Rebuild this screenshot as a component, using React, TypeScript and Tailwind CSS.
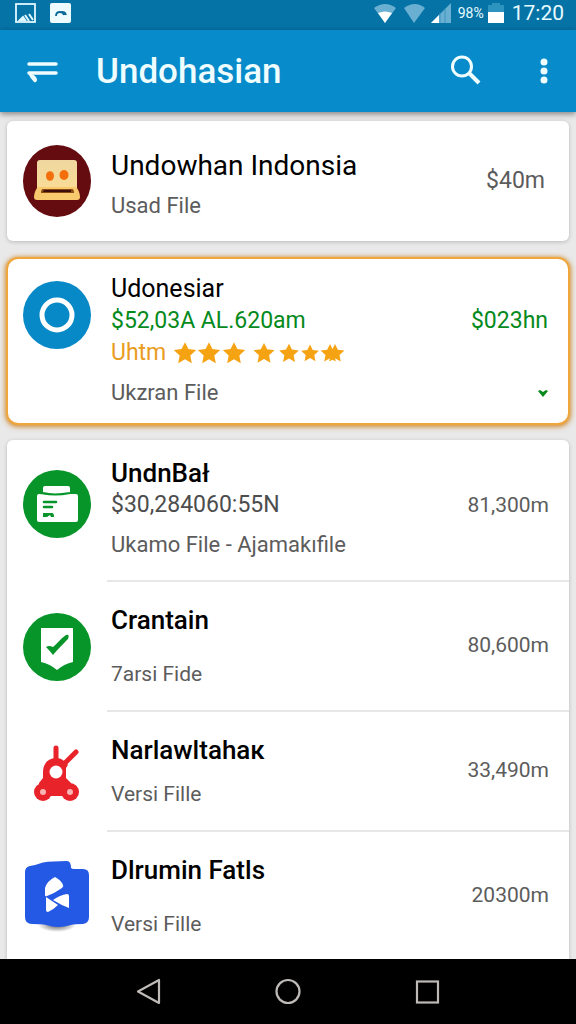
import type { ReactNode } from 'react';

/* ─────────────────────────────────────────────────────────────────────────
 * Icons
 * ───────────────────────────────────────────────────────────────────────── */

function LaptopAvatar() {
  return (
    <svg viewBox="0 0 68 72" className="h-[72px] w-[68px]" aria-hidden="true">
      <defs>
        <linearGradient id="laptop-screen" x1="0" y1="0" x2="0" y2="1">
          <stop offset="0%" stopColor="#efd7a0" />
          <stop offset="100%" stopColor="#fbdc95" />
        </linearGradient>
      </defs>
      <ellipse cx="34" cy="36" rx="34" ry="36" fill="#640c10" />
      <rect x="14" y="15" width="40" height="32" rx="3" fill="url(#laptop-screen)" />
      <path d="M15 42h38c2 2 4 6 4 10q0 3-3 3H14q-3 0-3-3c0-4 2-8 4-10z" fill="#f9c96d" />
      <path d="M20 44h29q2 0 2 4H18q0-4 2-4z" fill="#8a4a14" />
      <path d="M21 45h27v2H20z" fill="#3d0d0d" />
      <ellipse cx="27" cy="31" rx="4" ry="4.800" fill="#f26f0c" />
      <ellipse cx="41" cy="30" rx="4.500" ry="5" fill="#f26f0c" />
    </svg>
  );
}

function RingAvatar() {
  return (
    <svg viewBox="0 0 68 68" className="size-[68px]" aria-hidden="true">
      <circle cx="34" cy="34" r="34" fill="#0789c7" />
      <circle cx="34" cy="34" r="15" fill="none" stroke="#fff" strokeWidth="5" />
    </svg>
  );
}

function FolderAvatar() {
  return (
    <svg viewBox="0 0 68 68" className="size-[68px]" aria-hidden="true">
      <circle cx="34" cy="34" r="34" fill="#07952a" />
      <path d="M20 18q0-2 2-2h23q2 0 2 2v6H20z" fill="#fff" />
      <path d="M14 26q0-2 2-2l11 1 12-1h14q2 0 2 2v24q0 2-2 2H16q-2 0-2-2z" fill="#fff" />
      <path d="M20 23q11 3 27 0" fill="none" stroke="#07952a" strokeWidth="2" />
      <path d="M21 32h12M21 37h8" stroke="#07952a" strokeWidth="2.600" strokeLinecap="round" />
      <path d="M20 47v-4h9q2 0 2 4h-3l-1-2-3 2z" fill="#07952a" />
    </svg>
  );
}

function BadgeAvatar() {
  return (
    <svg viewBox="0 0 68 68" className="size-[68px]" aria-hidden="true">
      <circle cx="34" cy="34" r="34" fill="#07952a" />
      <path d="M18 15h32v34q-9 2-16 8-7-6-16-8z" fill="#fff" />
      <path d="M23 34q3-2 7 0c4-3 8-9 13-12q4-1 2 4c-5 5-9 9-15 16q-3-4-7-8z" fill="#07952a" />
    </svg>
  );
}

function RobotAvatar() {
  return (
    <svg viewBox="0 0 68 68" className="size-[68px]" aria-hidden="true">
      <g stroke="#e8232a" strokeWidth="5" strokeLinecap="round">
        <path d="M33 10v12M53 14L40 27" />
      </g>
      <path d="M20 35q0-14 13-15 5 0 8 3l4 4-2 3v14H20z" fill="#e8232a" />
      <path d="M20 40h23l5 5v13H16V45z" fill="#e8232a" />
      <circle cx="20" cy="54" r="9" fill="#e8232a" />
      <circle cx="47" cy="54" r="9" fill="#e8232a" />
      <circle cx="33" cy="34" r="6.500" fill="#fff" />
      <circle cx="20" cy="54" r="3" fill="#f9b4b4" />
      <circle cx="47" cy="54" r="3" fill="#f9b4b4" />
    </svg>
  );
}

function PuzzleAvatar() {
  return (
    <svg viewBox="0 0 68 72" className="h-[72px] w-[68px]" aria-hidden="true">
      <defs>
        <radialGradient id="puzzle-shadow">
          <stop offset="0%" stopColor="#333" stopOpacity="0.8" />
          <stop offset="100%" stopColor="#333" stopOpacity="0" />
        </radialGradient>
      </defs>
      <ellipse cx="34" cy="65" rx="19" ry="7" fill="url(#puzzle-shadow)" />
      <path
        d="M2 12q0-5 5-6 6-1 13-3.500 9-1.500 24-1.500 4 0 4 7 1 1 3 1h9q6 0 6 6v42q0 6-6 7-8 0-12 1-13 4-25 0-5-1-14-1-7 0-7-7z"
        fill="#2459e5"
      />
      <path d="M22 35v-7q2-7 10-11 6 3 8 8 1 1-1 3-7 5-15 8-2 1-2-1z" fill="#fff" />
      <path d="M30 40q7-5 14-6 2 0 2 2v12q-8-3-16-8z" fill="#fff" />
      <path d="M23 37l12 8q-5 5-10 7-2 0-2-2z" fill="#fff" />
    </svg>
  );
}

function StatusIcons() {
  return (
    <svg viewBox="0 0 78 20" className="h-5 w-[78px]" aria-hidden="true">
      <path d="M0 5q11-8 22 0L11 20z" fill="#69afd1" />
      <path d="M4 10q7-3 14 0l-7 10z" fill="#fff" />
      <path d="M30 5q11-8 21 0L40 20z" fill="#69afd1" />
      <path d="M57 20L77 0v20z" fill="#69afd1" />
      <path d="M57 20l8-8v8z" fill="#fff" />
      <path d="M66 10v10M71 6v14" stroke="#3f94be" strokeWidth="1" />
    </svg>
  );
}

const STAR = 'M0-11L3.500-4 11.500-3 5.500 2.500 7 10.500 0 6.500-7 10.500-5.500 2.500-11.500-3-3.500-4z';

const stars = [
  { x: 11, scale: 0.97 },
  { x: 35, scale: 0.97 },
  { x: 60, scale: 0.97 },
  { x: 90, scale: 0.92 },
  { x: 115, scale: 0.85 },
  { x: 136, scale: 0.78 },
  { x: 156, scale: 0.82 },
  { x: 161, scale: 0.82 },
];

function Stars() {
  return (
    <svg viewBox="0 0 172 24" className="h-6 w-[172px]" role="img" aria-label="Rating">
      {stars.map((s) => (
        <path
          key={s.x}
          d={STAR}
          transform={`translate(${s.x} 12) scale(${s.scale})`}
          fill="#f6a313"
        />
      ))}
    </svg>
  );
}

/* ─────────────────────────────────────────────────────────────────────────
 * Bars
 * ───────────────────────────────────────────────────────────────────────── */

function StatusBar() {
  return (
    <div className="flex h-[30px] shrink-0 items-center bg-[#0673a7] pr-3 pb-1 pl-[15px] text-[#e6fbff]">
      <svg viewBox="0 0 57 20" className="h-5 w-[57px]" aria-hidden="true">
        <rect x="1" y="1" width="19" height="18" fill="none" stroke="#dff8ff" strokeWidth="1.800" />
        <path d="M5 17l3-3 2 3zM10 12l4 6M14 11l4 6" fill="none" stroke="#dff8ff" strokeWidth="2" />
        <rect x="35" y="0" width="21" height="20" rx="2" fill="#effcff" />
        <path d="M41 13q0-4 4-4 3 0 4 3m-3-3q4-1 5 3" fill="none" stroke="#0a6a98" strokeWidth="1.800" />
      </svg>
      <div className="ml-auto flex items-center">
        <StatusIcons />
        <span className="ml-1.5 text-sm">98%</span>
        <svg viewBox="0 0 16 20" className="ml-1 h-5 w-4" aria-hidden="true">
          <path d="M0 2h4V0h8v2h4v8H0z" fill="#2d93bf" />
          <path d="M0 9h16v11H0z" fill="#fff" />
        </svg>
        <span className="ml-2 text-[21px]/[26px]">17:20</span>
      </div>
    </div>
  );
}

function AppBar() {
  return (
    <header className="relative z-10 flex h-[82px] shrink-0 items-center bg-[#078bca] pr-5 pl-[26px] text-[#effdff] shadow-[0_2px_6px_rgba(0,0,0,0.45)]">
      <button type="button" aria-label="Menu" className="flex size-8 items-center">
        <svg viewBox="0 0 32 24" className="h-6 w-8" aria-hidden="true">
          <path
            d="M3 5h27M3 14h27"
            fill="none"
            stroke="currentColor"
            strokeWidth="3.500"
            strokeLinecap="round"
          />
          <path d="M2 14q7 1 9 6 0 4-3 3-4-4-6-9z" fill="currentColor" />
        </svg>
      </button>
      <h1 className="ml-[38px] pt-0.5 text-[35px]/10 font-medium">Undohasian</h1>
      <div className="ml-auto flex items-center gap-[51px]">
        <button type="button" aria-label="Search">
          <svg viewBox="0 0 32 32" className="size-8" fill="none" stroke="currentColor" aria-hidden="true">
            <circle cx="13" cy="11.500" r="9.500" strokeWidth="3" />
            <path d="M20 18l10 10" strokeWidth="4" />
          </svg>
        </button>
        <button type="button" aria-label="More options">
          <svg viewBox="0 0 24 28" className="h-7 w-6" fill="currentColor" aria-hidden="true">
            <circle cx="12" cy="5" r="3.500" />
            <circle cx="12" cy="14" r="3.500" />
            <circle cx="12" cy="23" r="3.500" />
          </svg>
        </button>
      </div>
    </header>
  );
}

function NavBar() {
  return (
    <nav className="flex h-[65px] shrink-0 items-center justify-center gap-[108px] bg-black text-[#bdbab8]">
      <button type="button" aria-label="Back">
        <svg viewBox="0 0 32 32" className="size-8" fill="none" stroke="currentColor" strokeWidth="2.200" aria-hidden="true">
          <path d="M27 4v23L6 15.500z" strokeLinejoin="round" />
        </svg>
      </button>
      <button type="button" aria-label="Home">
        <svg viewBox="0 0 32 32" className="size-8" fill="none" stroke="currentColor" strokeWidth="2.200" aria-hidden="true">
          <circle cx="16" cy="15.500" r="11.500" />
        </svg>
      </button>
      <button type="button" aria-label="Recent apps">
        <svg viewBox="0 0 32 32" className="size-8" fill="none" stroke="currentColor" strokeWidth="2.200" aria-hidden="true">
          <rect x="5" y="5.500" width="21" height="21" />
        </svg>
      </button>
    </nav>
  );
}

/* ─────────────────────────────────────────────────────────────────────────
 * FileRow — one entry of the bottom list. The divider starts at the text.
 * ───────────────────────────────────────────────────────────────────────── */

type FileItem = {
  title: string;
  detail?: string;
  note: string;
  size: string;
  icon: ReactNode;
  compact?: boolean;
};

const files: FileItem[] = [
  {
    title: 'UndnBał',
    detail: '$30,284060:55N',
    note: 'Ukamo File - Ajamakıfile',
    size: '81,300m',
    icon: <FolderAvatar />,
  },
  { title: 'Crantain', note: '7arsi Fide', size: '80,600m', icon: <BadgeAvatar /> },
  { title: 'Narlawltahaк', note: 'Versi Fille', size: '33,490m', icon: <RobotAvatar />, compact: true },
  { title: 'Dlrumin Fatls', note: 'Versi Fille', size: '20300m', icon: <PuzzleAvatar /> },
];

function FileRow({ title, detail, note, size, icon, compact = false }: FileItem) {
  const padCls = detail ? 'pt-[17px] pb-[19px]' : 'pt-[22px] pb-5';
  const gapCls = detail ? 'mt-2 text-[22px]/8' : compact ? 'mt-3 text-[21px]/8' : 'mt-[22px] text-[21px]/8';
  return (
    <li className="group flex items-center pl-4">
      <div className={detail ? 'mt-[30px] shrink-0 self-start' : 'shrink-0'}>{icon}</div>
      <div
        className={`ml-4 flex min-w-0 flex-1 items-center justify-between border-b-2 border-[#e6e7e8] pr-5 pl-1 group-last:border-b-0 ${padCls}`}
      >
        <div>
          <h2 className="text-[26px]/8 font-medium text-black">{title}</h2>
          {detail ? <p className="text-[23px]/8 text-[#4d4d4d]">{detail}</p> : null}
          <p className={`text-[#5c5c5c] ${gapCls}`}>{note}</p>
        </div>
        <span className={`text-[21px]/8 text-[#5c5c5c] ${detail ? 'self-start pt-8' : 'pb-1'}`}>{size}</span>
      </div>
    </li>
  );
}

export default function App() {
  return (
    <div className="flex h-screen flex-col bg-[#e9e9ea] font-[Roboto,sans-serif]">
      <StatusBar />
      <AppBar />
      <main className="flex min-h-0 flex-1 flex-col overflow-hidden pt-[9px]">
        <section className="mx-[7px] flex min-h-[120px] shrink-0 items-center rounded-md bg-white pr-6 pl-4 shadow-[0_1px_4px_rgba(0,0,0,0.2)]">
          <LaptopAvatar />
          <div className="ml-5 flex-1 pt-2.5">
            <h2 className="text-[28px]/8 text-black">Undowhan Indonsia</h2>
            <p className="mt-2 text-[22px]/8 text-[#5c5c5c]">Usad File</p>
          </div>
          <span className="text-[23px]/8 text-[#5c5c5c]">$40m</span>
        </section>

        <section className="mx-[6px] mt-4 flex shrink-0 rounded-xl border-2 border-[#eea63d] bg-white pt-[14px] pr-5 pb-[14px] pl-[15px] shadow-[0_1px_5px_1px_rgba(205,125,20,0.85)]">
          <div className="mt-2 shrink-0">
            <RingAvatar />
          </div>
          <div className="ml-5 flex-1">
            <h2 className="text-[25px]/8 text-black">Udonesiar</h2>
            <p className="text-[23px]/8 text-[#058a1c]">$52,03A AL.620am</p>
            <div className="flex items-center gap-2">
              <span className="text-[23px]/8 text-[#ea9c22]">Uhtm</span>
              <Stars />
            </div>
            <p className="mt-2 text-[22px]/8 text-[#5c5c5c]">Ukzran File</p>
          </div>
          <div className="flex flex-col items-end justify-between pt-8 text-[#058a1c]">
            <span className="text-[23px]/8">$023hn</span>
            <button type="button" aria-label="Expand" className="flex h-8 items-center">
              <svg viewBox="0 0 10 8" className="h-2 w-[10px]" aria-hidden="true">
                <path d="M0 2l2-1 3 2 3-2 2 1-5 6z" fill="currentColor" />
              </svg>
            </button>
          </div>
        </section>

        <ul className="mx-[7px] mt-[15px] shrink-0 grow rounded-t-md bg-white shadow-[0_1px_4px_rgba(0,0,0,0.2)]">
          {files.map((file) => (
            <FileRow key={file.title} {...file} />
          ))}
        </ul>
      </main>
      <NavBar />
    </div>
  );
}
